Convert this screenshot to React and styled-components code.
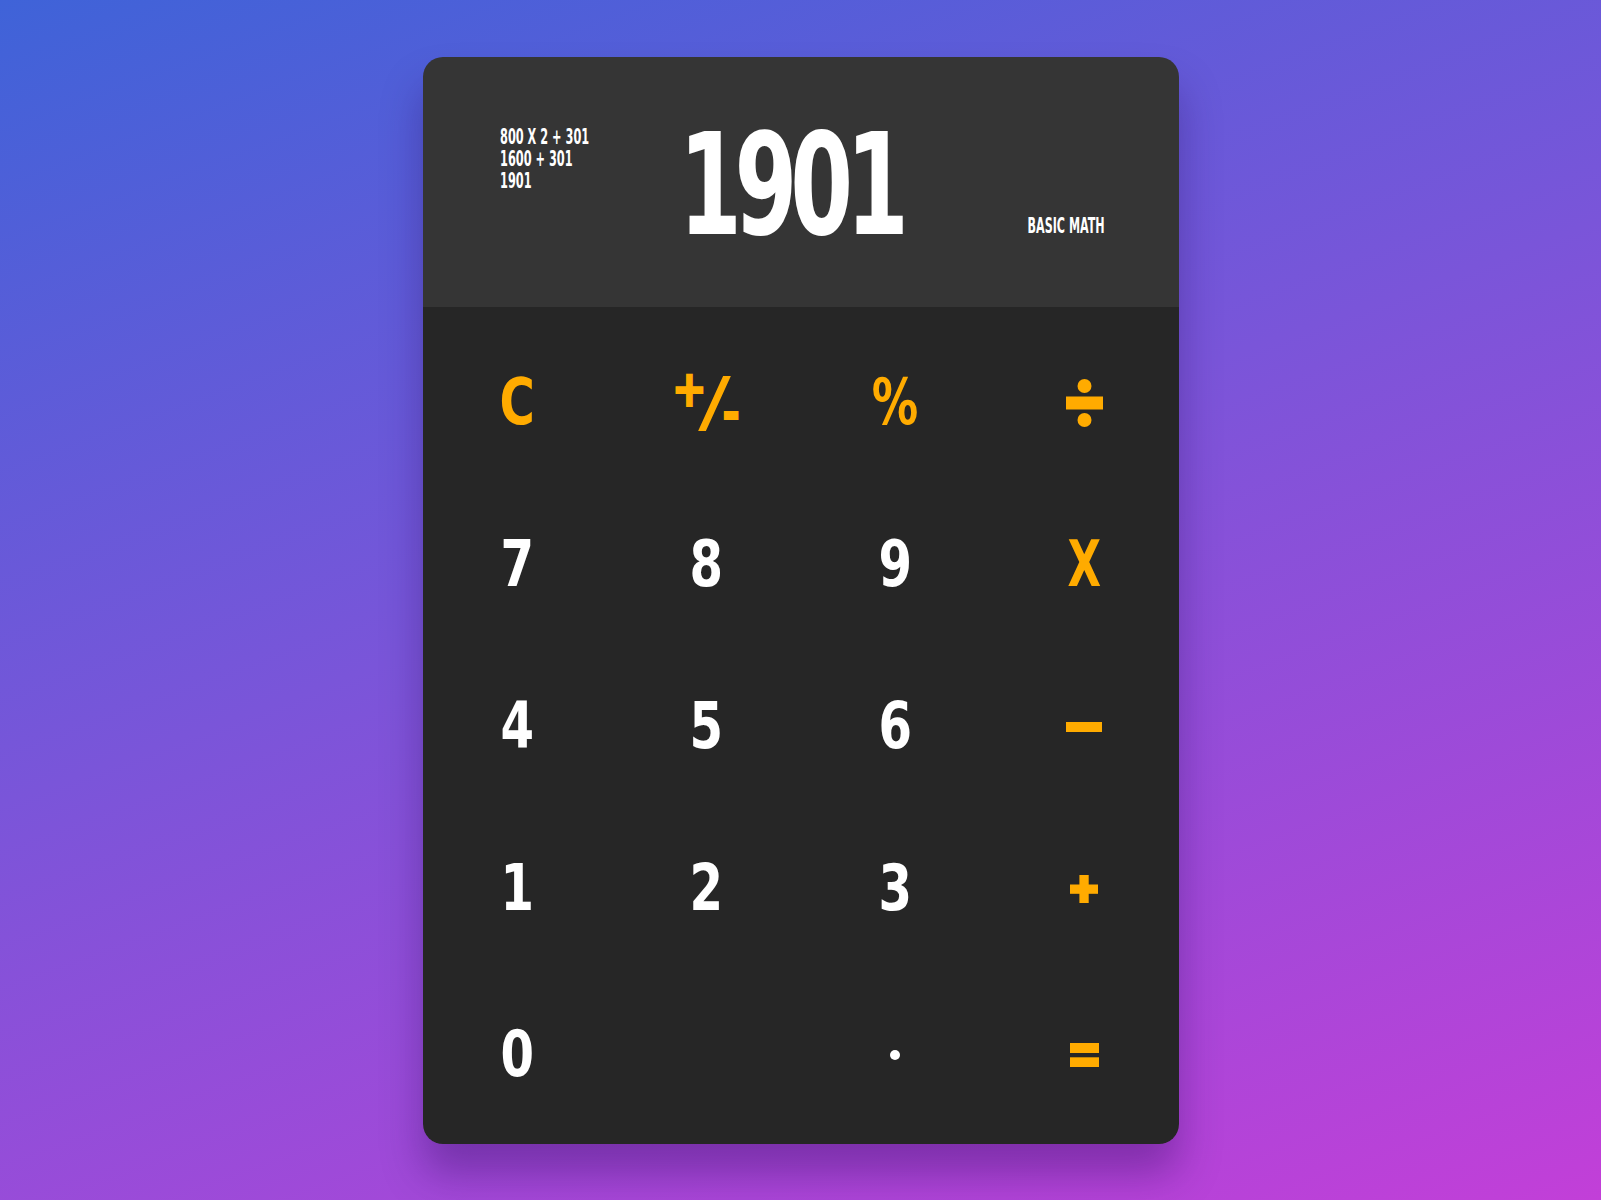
import React from 'react';
import styled, { createGlobalStyle } from 'styled-components';

const Colors = {
  accent: '#ffab00',
  text: '#ffffff',
  display: '#353535',
  keypad: '#262626',
};

const FONT = `"DejaVu Sans Condensed", "DejaVu Sans", "Liberation Sans", sans-serif`;

const GlobalStyle = createGlobalStyle`
  html, body {
    margin: 0;
    padding: 0;
  }
  body {
    font-family: ${FONT};
  }
`;

const Page = styled.div`
  width: 100%;
  height: 1200px;
  display: flex;
  align-items: center;
  justify-content: center;
  background: linear-gradient(160deg, #3f63d8 0%, #7a55d9 45%, #c23fd8 100%);
`;

const Card = styled.div`
  width: 756px;
  height: 1087px;
  border-radius: 20px;
  overflow: hidden;
  display: flex;
  flex-direction: column;
  box-shadow: 0 30px 40px rgba(40, 10, 90, 0.35);
`;

const Display = styled.div`
  height: 250px;
  flex: none;
  box-sizing: border-box;
  background: ${Colors.display};
  padding: 61px 74px 70px 77px;
  display: grid;
  grid-template-columns: minmax(0, 1fr) auto minmax(0, 1fr);
  grid-template-rows: 119px;
  align-items: start;
  color: ${Colors.text};
  font-weight: 700;
  white-space: nowrap;
`;

const History = styled.div`
  margin-top: 8px;
  font-size: 21px;
  line-height: 22px;
  transform: scaleX(0.6);
  transform-origin: left top;
`;

const Result = styled.div`
  margin: -1.5px 23px 0 0;
  font-size: 140px;
  line-height: 1;
  letter-spacing: -10px;
  transform: scaleX(0.717);
`;

const Mode = styled.div`
  justify-self: end;
  align-self: end;
  font-size: 21px;
  line-height: 1;
  transform: scaleX(0.59);
  transform-origin: right bottom;
`;

const Keypad = styled.div`
  flex: 1;
  background: ${Colors.keypad};
  display: grid;
  grid-template-columns: repeat(4, 1fr);
  grid-template-rows: repeat(4, 162px) 170px;
  padding: 15px 0 0;
`;

const Key = styled.button`
  border: none;
  background: transparent;
  padding: 0;
  font-family: ${FONT};
  font-weight: 700;
  font-size: 64.5px;
  line-height: 1;
  color: ${(props) => (props.$accent ? Colors.accent : Colors.text)};
  display: flex;
  align-items: center;
  justify-content: center;
  cursor: pointer;
`;

const Glyph = styled.span`
  display: block;
  line-height: 1;
  transform: scaleX(${(props) => props.$sx || 0.83});
  -webkit-text-stroke: ${(props) => props.$stroke || 0} currentColor;
`;

const Small = styled.span`
  font-size: 50px;
  line-height: 0;
  vertical-align: ${(props) => props.$shift || '0'};
`;

const Slash = styled.span`
  display: inline-block;
  transform: skewX(-12deg);
  margin: 0 -2px;
`;

const Icon = styled.svg`
  display: block;
  fill: currentColor;
`;

const Divide = () => (
  <Icon width="37" height="48" viewBox="0 0 37 48">
    <circle cx="18.5" cy="7" r="7" />
    <rect x="0" y="17.5" width="37" height="13" />
    <circle cx="18.5" cy="41" r="7" />
  </Icon>
);

const Minus = () => (
  <Icon width="36" height="10" viewBox="0 0 36 10">
    <rect x="0" y="0" width="36" height="10" />
  </Icon>
);

const Plus = () => (
  <Icon width="28" height="28" viewBox="0 0 28 28">
    <rect x="0" y="9.5" width="28" height="9.3" />
    <rect x="9.4" y="0" width="9.3" height="28" />
  </Icon>
);

const Equals = () => (
  <Icon width="29" height="24" viewBox="0 0 29 24">
    <rect x="0" y="0" width="29" height="10" />
    <rect x="0" y="14.3" width="29" height="10" />
  </Icon>
);

const Dot = () => (
  <Icon width="10" height="10" viewBox="0 0 10 10">
    <circle cx="5" cy="5" r="5" />
  </Icon>
);

const keys = [
  { label: 'C', accent: true },
  {
    label: (
      <Glyph $sx={0.92} $stroke="2px">
        <Small $shift="18px">+</Small>
        <Slash>/</Slash>
        <Small $shift="-6px">-</Small>
      </Glyph>
    ),
    accent: true,
    raw: true,
  },
  { label: '%', accent: true, sx: 0.8 },
  { label: <Divide />, accent: true, raw: true },
  { label: '7' },
  { label: '8' },
  { label: '9' },
  { label: 'X', accent: true, sx: 0.75 },
  { label: '4' },
  { label: '5' },
  { label: '6' },
  { label: <Minus />, accent: true, raw: true },
  { label: '1' },
  { label: '2' },
  { label: '3' },
  { label: <Plus />, accent: true, raw: true },
  { label: '0' },
  { label: '', raw: true },
  { label: <Dot />, raw: true },
  { label: <Equals />, accent: true, raw: true },
];

export default function App() {
  return (
    <>
      <GlobalStyle />
      <Page>
        <Card>
          <Display>
            <History>
              <div>800 X 2 + 301</div>
              <div>1600 + 301</div>
              <div>1901</div>
            </History>
            <Result>1901</Result>
            <Mode>BASIC MATH</Mode>
          </Display>
          <Keypad>
            {keys.map((k, i) => (
              <Key key={i} $accent={k.accent}>
                {k.raw ? k.label : <Glyph $sx={k.sx}>{k.label}</Glyph>}
              </Key>
            ))}
          </Keypad>
        </Card>
      </Page>
    </>
  );
}
